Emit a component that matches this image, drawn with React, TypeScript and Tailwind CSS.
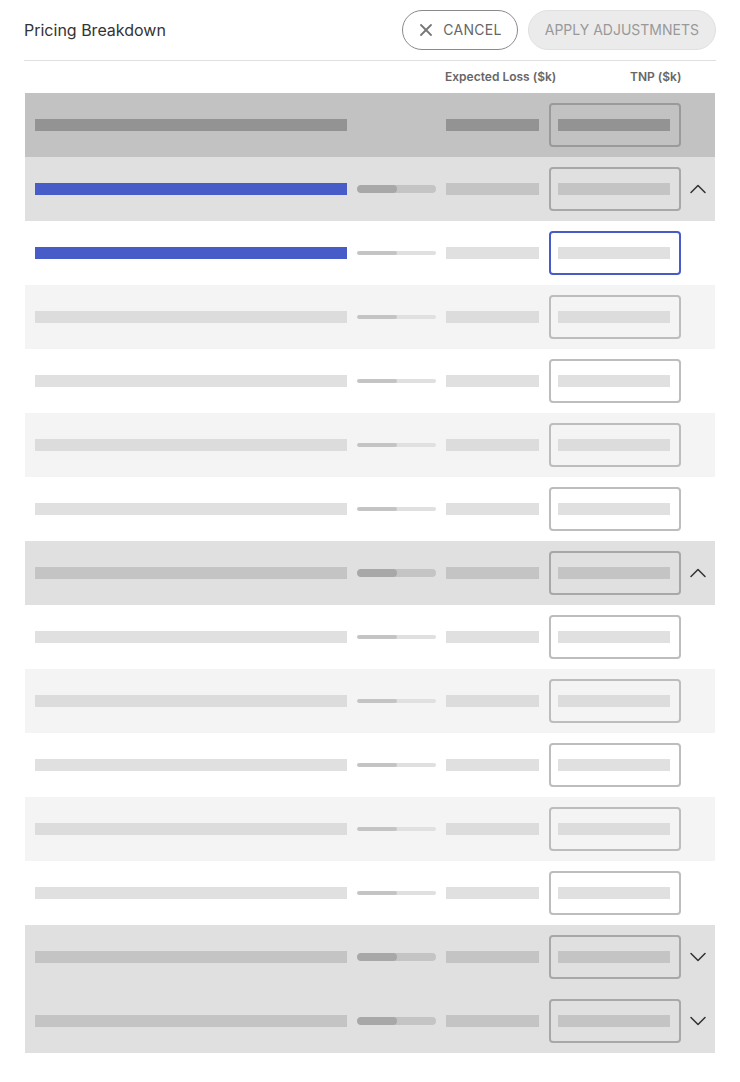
import { ChevronDown, ChevronUp, X } from "lucide-react";

type Kind = "total" | "group" | "child";

type Row = {
    kind: Kind;
    stripe?: boolean;
    selected?: boolean;
    open?: boolean;
};

const rows: Row[] = [
    { kind: "total" },
    { kind: "group", selected: true, open: true },
    { kind: "child", selected: true },
    { kind: "child", stripe: true },
    { kind: "child" },
    { kind: "child", stripe: true },
    { kind: "child" },
    { kind: "group", open: true },
    { kind: "child" },
    { kind: "child", stripe: true },
    { kind: "child" },
    { kind: "child", stripe: true },
    { kind: "child" },
    { kind: "group", open: false },
    { kind: "group", open: false },
];

function Progress({ kind }: { kind: Kind }) {
    if (kind === "total") return <div className="w-[79px]" />;
    if (kind === "group") {
        return (
            <div className="w-[79px] h-[8px] rounded-full bg-[#c4c4c4] overflow-hidden">
                <div className="w-[40px] h-full rounded-full bg-[#a8a8a8]" />
            </div>
        );
    }
    return (
        <div className="w-[79px] h-[4px] rounded-full bg-[#e0e0e0] overflow-hidden">
            <div className="w-[40px] h-full rounded-full bg-[#c4c4c4]" />
        </div>
    );
}

function TableRow({ row }: { row: Row }) {
    let bg = row.stripe ? "bg-[#f4f4f4]" : "bg-white";
    let bar = row.stripe ? "bg-[#dcdcdc]" : "bg-[#e0e0e0]";
    let border = "border-[#bdbdbd]";
    if (row.kind === "total") {
        bg = "bg-[#c2c2c2]";
        bar = "bg-[#939393]";
        border = "border-[#9a9a9a]";
    } else if (row.kind === "group") {
        bg = "bg-[#e0e0e0]";
        bar = "bg-[#c4c4c4]";
        border = "border-[#a8a8a8]";
    }
    const nameBar = row.selected ? "bg-[#475cc7]" : bar;
    const inputBorder = row.selected && row.kind === "child" ? "border-[#475cc7]" : border;

    return (
        <div className={`flex items-center h-16 pl-[10px] ${bg}`}>
            <div className={`w-[312px] h-3 ${nameBar}`} />
            <div className="ml-[10px]">
                <Progress kind={row.kind} />
            </div>
            <div className={`ml-[10px] w-[93px] h-3 ${bar}`} />
            <div className={`ml-[10px] w-[132px] h-[44px] rounded-[4px] border-2 ${inputBorder} flex items-center pl-[7px]`}>
                <div className={`w-[112px] h-3 ${bar}`} />
            </div>
            <div className="flex-1 flex justify-center text-[#333]">
                {row.kind === "group" && (row.open
                    ? <ChevronUp size={28} strokeWidth={1.3} />
                    : <ChevronDown size={28} strokeWidth={1.3} />)}
            </div>
        </div>
    );
}

export default function App() {
    return (
        <div className="bg-white min-h-[1082px] px-6" style={{ fontFamily: "Inter, 'Noto Sans', sans-serif" }}>
            <div className="flex items-center justify-between h-[61px] border-b border-[#e0e0e0]">
                <h1 className="text-base text-[#333]">Pricing Breakdown</h1>
                <div className="flex gap-[10px]">
                    <button className="flex items-center gap-[7px] h-10 pl-[13px] pr-[15px] rounded-full border border-[#8a8a8a] text-sm text-[#666] tracking-[0.3px]">
                        <X size={20} strokeWidth={2.2} className="text-[#777]" />
                        CANCEL
                    </button>
                    <button className="h-10 px-4 rounded-full border border-[#e0e0e0] bg-[#ebebeb] text-sm text-[#999]">
                        APPLY ADJUSTMNETS
                    </button>
                </div>
            </div>
            <div className="flex items-center h-[32px] text-xs font-semibold text-[#666]">
                <div className="ml-[421px] w-[112px]">Expected Loss ($k)</div>
                <div className="ml-[73px]">TNP ($k)</div>
            </div>
            <div className="ml-px w-[690px]">
                {rows.map((row, i) => (
                    <TableRow key={i} row={row} />
                ))}
            </div>
        </div>
    );
}
